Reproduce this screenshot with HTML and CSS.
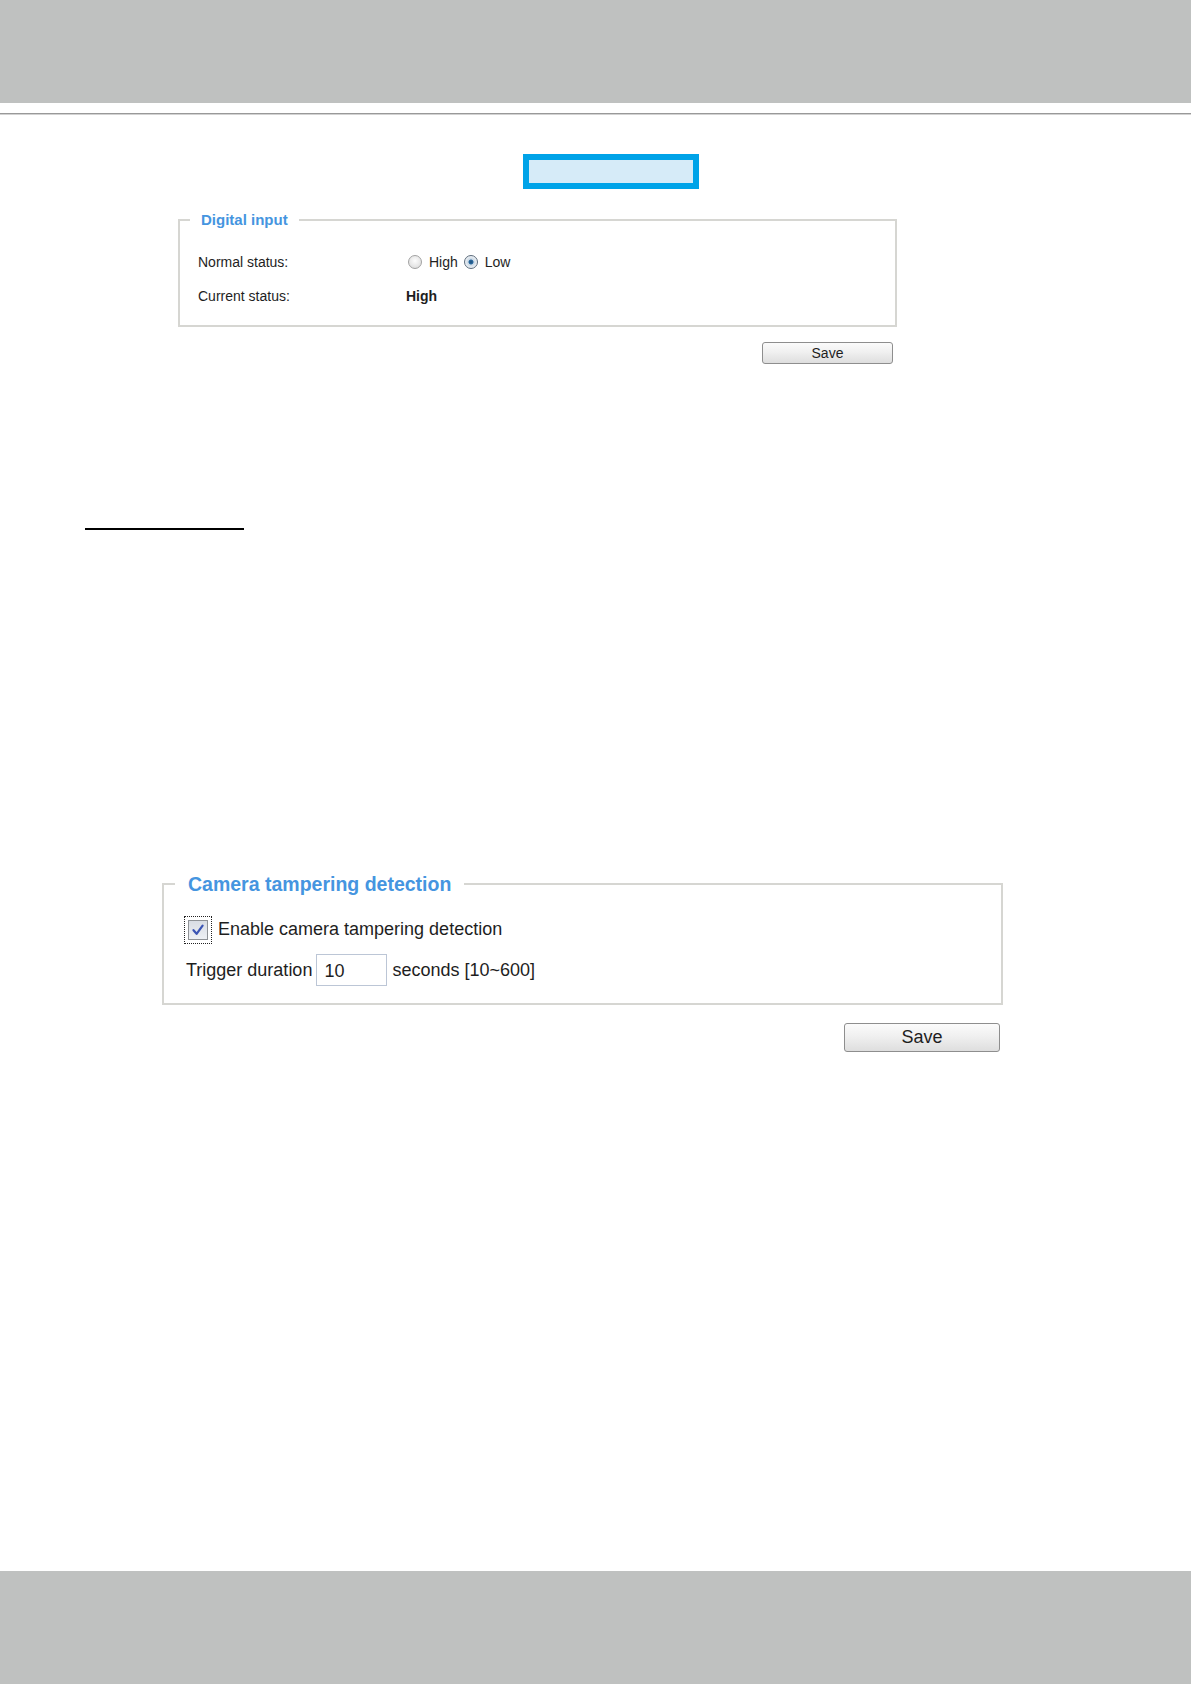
FILE: index.html
```html
<!DOCTYPE html>
<html>
<head>
<meta charset="utf-8">
<link rel="stylesheet" href="styles.css">
</head>
<body>
<div class="page">
  <div class="header"></div>
  <div class="rule"></div>
  <div class="tab-box"></div>

  <fieldset class="panel panel-di">
    <legend>Digital input</legend>
    <div class="row">
      <span class="label">Normal status:</span>
      <span class="radio"></span><span class="opt">High</span>
      <span class="radio checked"></span><span class="opt">Low</span>
    </div>
    <div class="row">
      <span class="label">Current status:</span>
      <span class="value">High</span>
    </div>
  </fieldset>
  <div class="btn btn-small">Save</div>

  <div class="underline"></div>

  <fieldset class="panel panel-ct">
    <legend>Camera tampering detection</legend>
    <div class="crow">
      <span class="focus">
        <span class="check">
          <svg width="16" height="16" viewBox="0 0 16 16"><path d="M3.5 8.2 L6.6 11.8 L12.6 3.6" fill="none" stroke="#3c55b4" stroke-width="2.2" stroke-linecap="round" stroke-linejoin="round"/></svg>
        </span>
      </span>
      <span class="ctext">Enable camera tampering detection</span>
    </div>
    <div class="crow trow">
      <span class="ctext">Trigger duration</span>
      <span class="input">10</span>
      <span class="ctext">seconds [10~600]</span>
    </div>
  </fieldset>
  <div class="btn btn-big">Save</div>

  <div class="footer"></div>
</div>
</body>
</html>
```
FILE: styles.css
```css
html, body {
  margin: 0;
  padding: 0;
  background: #ffffff;
}
.page {
  min-height: 1684px;
  display: flex;
  flex-direction: column;
  align-items: flex-start;
  font-family: "Liberation Sans", Arial, sans-serif;
  color: #1e1e1e;
}
.header {
  align-self: stretch;
  height: 103px;
  background: #bfc1c0;
}
.rule {
  align-self: stretch;
  margin-top: 10px;
  height: 0;
  border-top: 1px solid #999999;
  border-bottom: 1px solid #d2d2d2;
}
.tab-box {
  margin-top: 39px;
  margin-left: 523px;
  box-sizing: border-box;
  width: 176px;
  height: 35px;
  border: 6px solid #00a3e8;
  background: #d6ebf8;
}
.panel {
  margin: 0;
  min-width: 0;
  box-sizing: border-box;
  border: 2px solid #d6d6d2;
}
.panel legend {
  font-weight: bold;
  color: #4595e0;
}
.panel-di {
  margin-top: 22px;
  margin-left: 178px;
  width: 719px;
  padding: 16px 18px 12px 18px;
}
.panel-di legend {
  font-size: 15px;
  line-height: 18px;
  margin-left: -8px;
  padding: 0 11px;
}
.row {
  display: flex;
  align-items: center;
  height: 34px;
  font-size: 14px;
}
.label {
  width: 208px;
  flex: none;
}
.value {
  font-weight: bold;
}
.radio {
  box-sizing: border-box;
  width: 14px;
  height: 14px;
  border-radius: 50%;
  border: 1px solid #a2a2a2;
  background: radial-gradient(circle at 50% 40%, #fdfdfd 0%, #e6e6e6 60%, #d4d4d4 100%);
  margin-left: 2px;
  flex: none;
}
.radio.checked {
  border-color: #5b6b7b;
  background: radial-gradient(circle at 50% 50%, #1d4f7c 0%, #2a6aa0 24%, #c9d7e4 34%, #eef2f6 70%, #d4dce4 100%);
}
.opt {
  margin-left: 7px;
  margin-right: 4px;
}
.btn {
  box-sizing: border-box;
  display: flex;
  align-items: center;
  justify-content: center;
  border: 1px solid #8e8e8e;
  border-radius: 3px;
  background: linear-gradient(#fbfbfb, #f0f0f0 45%, #dedede);
  color: #1e1e1e;
}
.btn-small {
  margin-top: 15px;
  margin-left: 762px;
  width: 131px;
  height: 22px;
  font-size: 14px;
}
.underline {
  margin-top: 164px;
  margin-left: 85px;
  width: 159px;
  height: 2px;
  background: #000000;
}
.panel-ct {
  margin-top: 342px;
  margin-left: 162px;
  width: 841px;
  padding: 19px 20px 17px 20px;
}
.panel-ct legend {
  font-size: 19.5px;
  line-height: 24px;
  margin-left: -9px;
  padding: 0 13px;
}
.crow {
  display: flex;
  align-items: center;
  height: 29px;
  font-size: 18px;
}
.trow {
  margin-top: 10px;
  height: 32px;
  padding-left: 2px;
}
.focus {
  box-sizing: border-box;
  width: 28px;
  height: 28px;
  border: 1px dotted #222;
  display: flex;
  align-items: center;
  justify-content: center;
  flex: none;
}
.check {
  box-sizing: border-box;
  width: 20px;
  height: 20px;
  border: 1px solid #8f9296;
  background: linear-gradient(#d9dde4, #eef0f4);
  display: flex;
  align-items: center;
  justify-content: center;
}
.ctext {
  margin-left: 6px;
}
.trow .ctext:first-child {
  margin-left: 0;
}
.input {
  box-sizing: border-box;
  width: 71px;
  height: 32px;
  margin-left: 4px;
  border: 1px solid #bcc6d6;
  padding: 4px 0 0 7px;
  font-size: 18px;
  line-height: 24px;
}
.trow .input + .ctext {
  margin-left: 5px;
}
.btn-big {
  margin-top: 18px;
  margin-left: 844px;
  width: 156px;
  height: 29px;
  font-size: 18px;
}
.footer {
  align-self: stretch;
  margin-top: auto;
  height: 113px;
  background: #bfc1c0;
}
```
